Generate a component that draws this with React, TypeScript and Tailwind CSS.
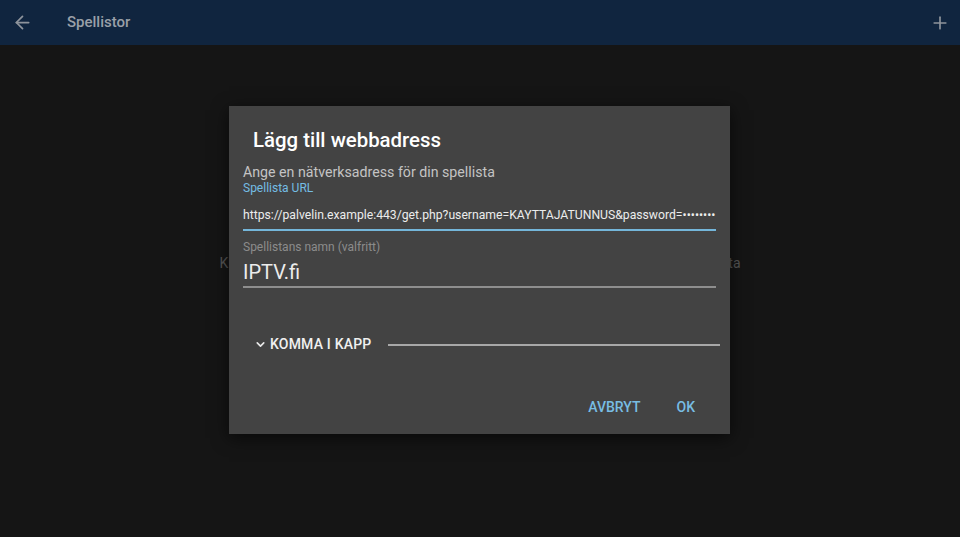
import React from "react";
import { ArrowLeft, Plus, ChevronDown } from "lucide-react";

export default function App() {
  return (
    <div className="relative h-[537px] w-[960px] overflow-hidden bg-[#151515] font-['Roboto',sans-serif]">
      {/* Top app bar */}
      <header className="flex h-[45px] items-center bg-[#10253f] pl-[12px] pr-[10px]">
        <ArrowLeft size={21} strokeWidth={2} className="text-[#8e949c]" />
        <h1 className="ml-[34px] text-[15px] font-medium text-[#9aa0a8]">Spellistor</h1>
        <div className="flex-1" />
        <Plus size={20} strokeWidth={2} className="text-[#8e949c]" />
      </header>

      {/* Empty-state text behind the dialog */}
      <div className="flex justify-center pt-[208px]">
        <p className="w-[521px] text-[14px] text-[#555555] [text-align-last:justify] whitespace-nowrap">
          Klicka på plusknappen för att lägga till din spellista
        </p>
      </div>

      {/* Dialog */}
      <div className="absolute left-[229px] top-[106px] flex h-[328px] w-[501px] flex-col bg-[#434343] shadow-[0_4px_16px_rgba(0,0,0,0.6)]">
        <div className="pl-[24px] pr-[14px] pt-[22px]">
          <h2 className="text-[20.4px] font-medium leading-[24px] text-white">Lägg till webbadress</h2>
        </div>

        <div className="pl-[14px] pr-[14px] pt-[12px]">
          <p className="text-[14.2px] leading-[17px] text-[#c4c4c4]">Ange en nätverksadress för din spellista</p>
          <label className="block text-[12px] leading-[14px] text-[#74bde4]">Spellista URL</label>

          <div className="mt-[12px] border-b-2 border-[#74b6da] pb-[6px]">
            <div className="whitespace-nowrap text-[12.2px] leading-[16px] text-[#ececec]">
              https://palvelin.example:443/get.php?username=KAYTTAJATUNNUS&amp;password=••••••••
            </div>
          </div>

          <label className="mt-[9px] block text-[12px] leading-[14px] text-[#8c8c8c]">Spellistans namn (valfritt)</label>
          <div className="mt-[6px] border-b-2 border-[#8e8e8e] pb-[2px]">
            <div className="text-[20px] leading-[24px] text-[#ececec]">IPTV.fi</div>
          </div>
        </div>

        {/* Expandable section */}
        <div className="mt-[46px] flex items-center pl-[25px] pr-[10px]">
          <ChevronDown size={13} strokeWidth={3} className="text-[#e8e8e8]" />
          <span className="ml-[3px] text-[14px] font-medium tracking-[0.2px] text-[#f0f0f0]">KOMMA I KAPP</span>
          <div className="ml-[16px] h-[2px] flex-1 bg-[#a8a8a8]" />
        </div>

        {/* Actions */}
        <div className="mt-[42px] flex justify-end gap-[36px] pr-[35px]">
          <button className="text-[14px] font-medium text-[#78bde3]">AVBRYT</button>
          <button className="text-[14px] font-medium text-[#78bde3]">OK</button>
        </div>
      </div>
    </div>
  );
}
